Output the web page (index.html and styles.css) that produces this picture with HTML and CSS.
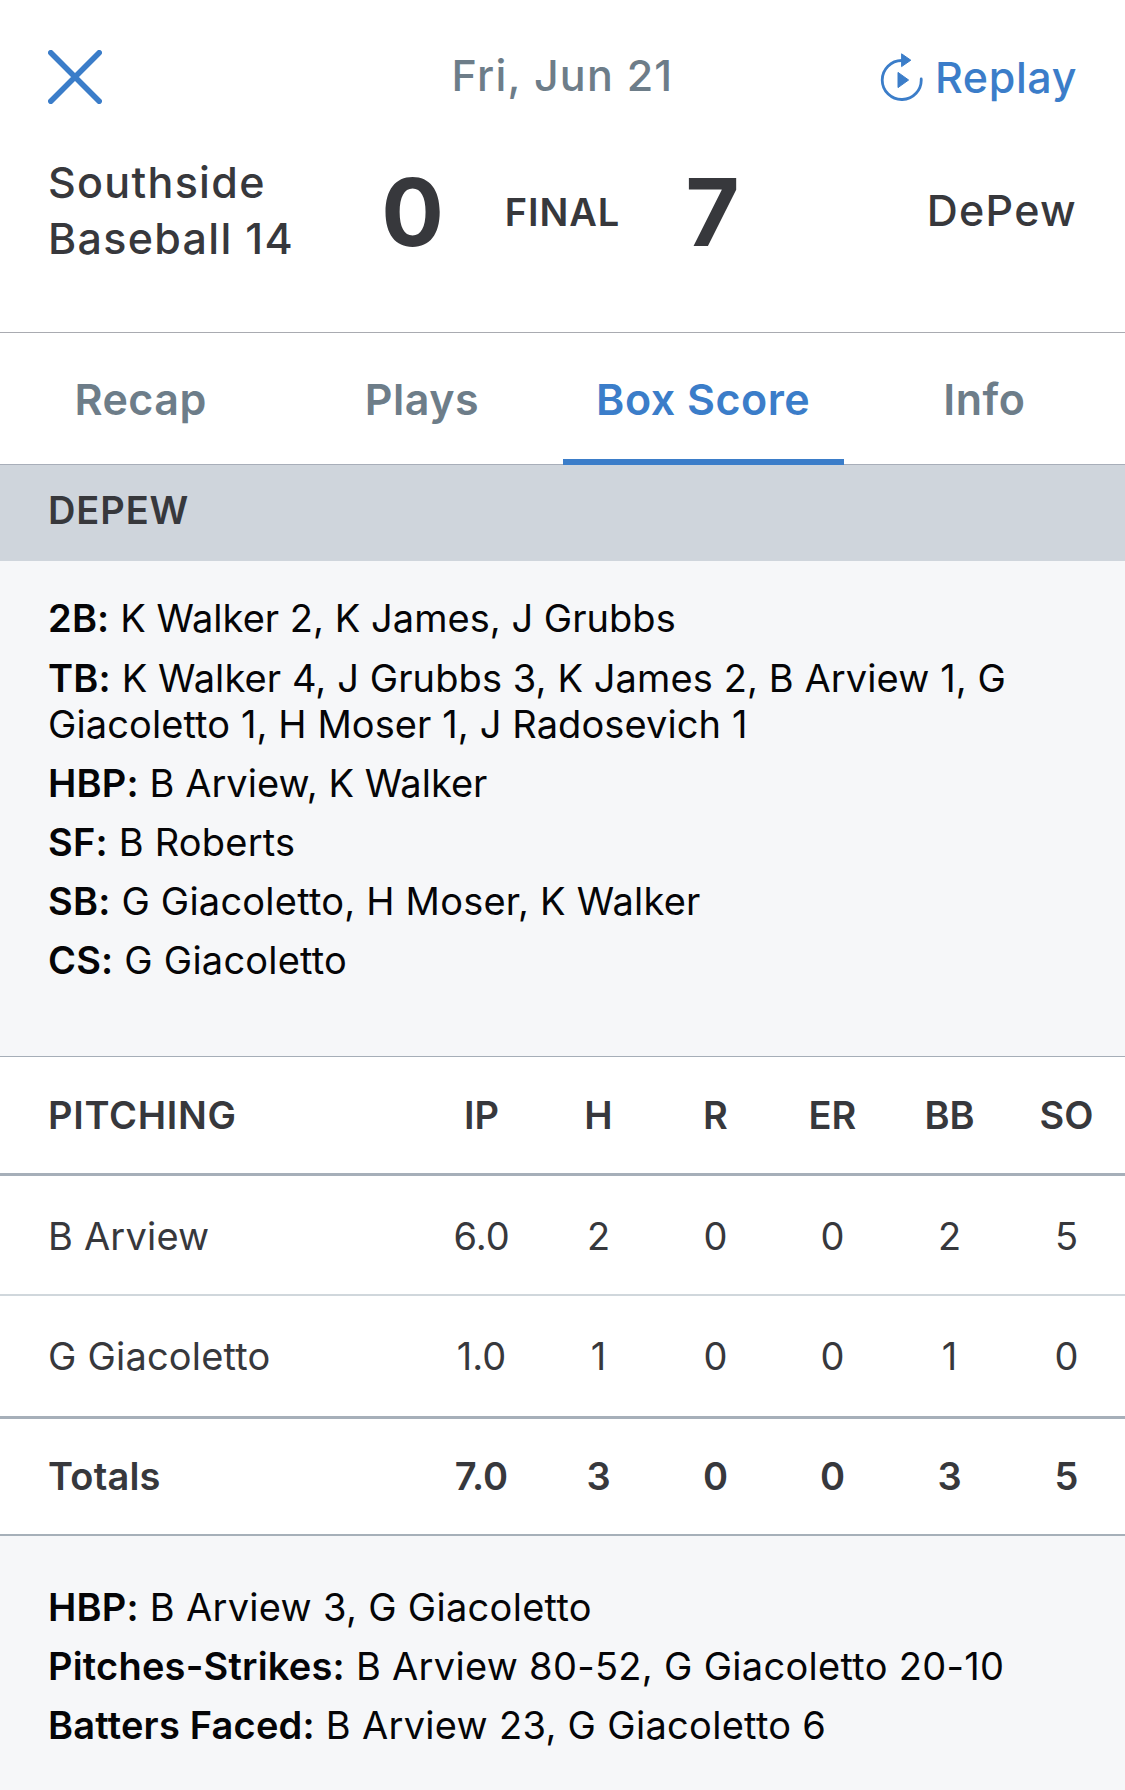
FILE: index.html
```html
<!DOCTYPE html>
<html lang="en">
<head>
    <meta charset="UTF-8" />
    <meta name="viewport" content="width=device-width, initial-scale=1.0"/>
    <title>Box Score</title>
    <link rel="stylesheet" href="styles.css">
</head>
<body>
    <header class="header">
        <div class="topbar">
            <button class="close" aria-label="Close">
                <svg width="54" height="54" viewBox="0 0 54 54">
                    <path d="M2.8 2.8L51.2 51.2M51.2 2.8L2.8 51.2" />
                </svg>
            </button>
            <div class="date">Fri, Jun 21</div>
            <a class="replay" href="#">
                <svg width="44" height="50" viewBox="0 0 44 50">
                    <path class="ring" d="M23 9.5A19.5 19.5 0 1 0 42.2 28" />
                    <path class="arrow" d="M22.6 2.8v12.8l9.2-6.4z" />
                    <path class="arrow" d="M19 21.4v15.2l10.6-7.6z" />
                </svg>
                <span>Replay</span>
            </a>
        </div>
        <div class="scoreboard">
            <div class="team">Southside Baseball 14</div>
            <div class="score">0</div>
            <div class="status">FINAL</div>
            <div class="score">7</div>
            <div class="team away">DePew</div>
        </div>
    </header>

    <nav class="tabs">
        <a class="tab" href="#">Recap</a>
        <a class="tab" href="#">Plays</a>
        <a class="tab active" href="#">Box Score</a>
        <a class="tab" href="#">Info</a>
    </nav>

    <h2 class="team-title">DEPEW</h2>

    <div class="notes">
        <p class="tight"><b>2B:</b> K Walker 2, K James, J Grubbs</p>
        <p class="long"><b>TB:</b> K Walker 4, J Grubbs 3, K James 2, B Arview 1, G Giacoletto 1, H Moser 1, J Radosevich 1</p>
        <p class="tight"><b>HBP:</b> B Arview, K Walker</p>
        <p><b>SF:</b> B Roberts</p>
        <p><b>SB:</b> G Giacoletto, H Moser, K Walker</p>
        <p><b>CS:</b> G Giacoletto</p>
    </div>

    <table class="pitching">
        <thead>
            <tr><th class="name">PITCHING</th><th>IP</th><th>H</th><th>R</th><th>ER</th><th>BB</th><th>SO</th></tr>
        </thead>
        <tbody>
            <tr><td class="name">B Arview</td><td>6.0</td><td>2</td><td>0</td><td>0</td><td>2</td><td>5</td></tr>
            <tr><td class="name">G Giacoletto</td><td>1.0</td><td>1</td><td>0</td><td>0</td><td>1</td><td>0</td></tr>
        </tbody>
        <tfoot>
            <tr><td class="name">Totals</td><td>7.0</td><td>3</td><td>0</td><td>0</td><td>3</td><td>5</td></tr>
        </tfoot>
    </table>

    <div class="notes notes-pitching">
        <p><b>HBP:</b> B Arview 3, G Giacoletto</p>
        <p><b>Pitches-Strikes:</b> B Arview 80-52, G Giacoletto 20-10</p>
        <p><b>Batters Faced:</b> B Arview 23, G Giacoletto 6</p>
    </div>
</body>
</html>
```
FILE: styles.css
```css
* {
    box-sizing: border-box;
}
body {
    margin: 0;
    height: 1790px;
    overflow: hidden;
    background-color: #f6f7f9;
    color: #37383c;
    font-family: Inter, "Liberation Sans", sans-serif;
    font-size: 38px;
    line-height: 46px;
}
a {
    text-decoration: none;
}
svg {
    display: block;
    fill: none;
}
.header {
    height: 333px;
    padding: 49px 48px 0;
    background-color: #fff;
    border-bottom: 1px solid #a9abb1;
}
.topbar {
    display: grid;
    grid-template-columns: 1fr auto 1fr;
    align-items: start;
    height: 105px;
    font-size: 43px;
    font-weight: 500;
    line-height: 52px;
}
.close {
    width: 54px;
    margin-top: 1px;
    padding: 0;
    border: none;
    background: none;
}
.close path {
    stroke: #3b7dc9;
    stroke-width: 5.6;
    stroke-linecap: round;
}
.date {
    color: #6d7d89;
    letter-spacing: 1.2px;
}
.replay {
    display: flex;
    justify-content: flex-end;
    gap: 12px;
    padding-top: 2px;
    color: #3b7dc9;
    letter-spacing: 0.6px;
}
.ring {
    stroke: #3b7dc9;
    stroke-width: 2.8;
    stroke-linecap: round;
}
.arrow {
    fill: #3b7dc9;
    stroke: #3b7dc9;
    stroke-width: 1;
    stroke-linejoin: round;
}
.scoreboard {
    display: grid;
    grid-template-columns: 1fr 150px 150px 150px 1fr;
    align-items: center;
    height: 112px;
    text-align: center;
}
.team {
    font-size: 43px;
    font-weight: 500;
    line-height: 56px;
    letter-spacing: 1.3px;
    text-align: left;
}
.away {
    text-align: right;
}
.score {
    padding-top: 4px;
    font-size: 93px;
    font-weight: 700;
    line-height: 100px;
}
.status {
    padding-top: 4px;
    font-weight: 600;
    letter-spacing: 0.9px;
}
.tabs {
    display: flex;
    height: 132px;
    background-color: #fff;
    border-bottom: 1px solid #a8aeb9;
}
.tab {
    flex: 1;
    margin-bottom: -1px;
    padding-top: 1px;
    border-bottom: 6px solid transparent;
    color: #6d7d89;
    font-size: 43px;
    font-weight: 600;
    line-height: 131px;
    letter-spacing: 0.5px;
    text-align: center;
}
.active {
    color: #3b7dc9;
    border-color: #3b7dc9;
}
.team-title {
    height: 96px;
    margin: 0;
    padding: 22px 48px 0;
    background-color: #cfd5dc;
    font-size: 38px;
    font-weight: 600;
    letter-spacing: 0.9px;
}
.notes {
    height: 495px;
    padding: 34px 48px 0;
    color: #050507;
    letter-spacing: 0.22px;
}
.notes p {
    margin: 0 0 13px;
}
.notes b {
    font-weight: 600;
    letter-spacing: 0.2px;
}
.notes .tight {
    letter-spacing: 0.03px;
}
.notes .long {
    padding-top: 1px;
    letter-spacing: 0.1px;
}
.notes-pitching {
    height: 254px;
    padding-top: 48px;
    letter-spacing: 0.3px;
}
.pitching {
    width: 100%;
    table-layout: fixed;
    border-collapse: separate;
    border-spacing: 0;
    background-color: #fff;
    text-align: center;
}
.pitching th, .pitching td {
    width: 117px;
    padding: 0;
    border-bottom: 2px solid #d0d7dc;
}
.pitching .name {
    width: auto;
    padding-left: 48px;
    letter-spacing: 0.2px;
    text-align: left;
}
.pitching th {
    height: 120px;
    border-top: 1px solid #a6aeb8;
    border-bottom: 3px solid #a6afb9;
    font-weight: 600;
}
.pitching th.name {
    letter-spacing: 0.7px;
}
.pitching td {
    height: 120px;
    padding-top: 1px;
}
.pitching tbody tr:last-child td {
    height: 123px;
    padding-top: 0;
    border-bottom: 3px solid #a6afb9;
}
.pitching tfoot td {
    height: 117px;
    padding: 0 0 2px;
    border-bottom: 2px solid #a6b0b9;
    font-weight: 600;
}
```
